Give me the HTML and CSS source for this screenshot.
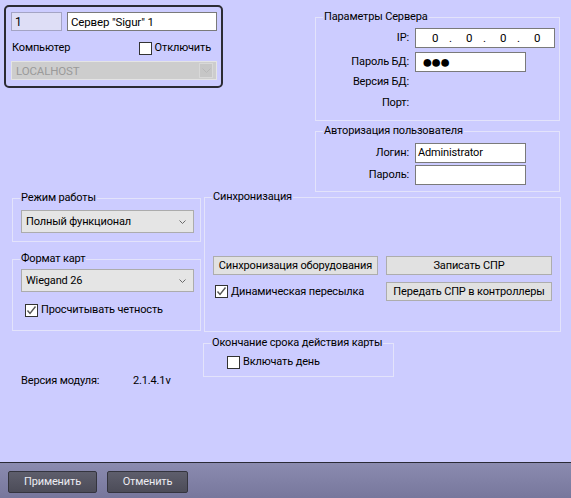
FILE: index.html
```html
<!DOCTYPE html>
<html lang="ru">
<head>
<meta charset="utf-8">
<title>Сервер Sigur</title>
<link rel="stylesheet" href="styles.css">
</head>
<body>
<div class="window">
  <div class="main">
    <div class="row-top">
      <div class="card">
        <div class="card-line">
          <div class="field field-id">1</div>
          <div class="field field-name">Сервер "Sigur" 1</div>
        </div>
        <div class="card-line card-mid">
          <span class="txt">Компьютер</span>
          <span class="check check-off"><span class="box"></span>Отключить</span>
        </div>
        <div class="combo combo-disabled">
          <span class="combo-text">LOCALHOST</span>
          <span class="combo-btn"><svg width="9" height="5" viewBox="0 0 9 5"><polyline points="0.5,0.5 4.5,4.5 8.5,0.5" fill="none" stroke="#b8b8b8" stroke-width="1"/></svg></span>
        </div>
      </div>
      <div class="col-right">
        <div class="group g-server">
          <div class="group-title">Параметры Сервера</div>
          <div class="frow fr-ip">
            <span class="lbl">IP:</span>
            <div class="field field-ip"><span>0</span><span>.</span><span>0</span><span>.</span><span>0</span><span>.</span><span>0</span></div>
          </div>
          <div class="frow fr-pwd">
            <span class="lbl">Пароль БД:</span>
            <div class="field field-pwd"><span class="dots">●●●</span></div>
          </div>
          <div class="frow fr-ver">
            <span class="lbl">Версия БД:</span>
          </div>
          <div class="frow fr-port">
            <span class="lbl">Порт:</span>
          </div>
        </div>
        <div class="group g-auth">
          <div class="group-title">Авторизация пользователя</div>
          <div class="frow fr-login">
            <span class="lbl">Логин:</span>
            <div class="field field-auth">Administrator</div>
          </div>
          <div class="frow fr-pass">
            <span class="lbl">Пароль:</span>
            <div class="field field-auth"></div>
          </div>
        </div>
      </div>
    </div>

    <div class="row-mid">
      <div class="col-left">
        <div class="group g-mode">
          <div class="group-title">Режим работы</div>
          <div class="combo combo-mode">
            <span class="combo-text">Полный функционал</span>
            <svg class="chev" width="7" height="4" viewBox="0 0 7 4"><polyline points="0.5,0.5 3.5,3.5 6.5,0.5" fill="none" stroke="#6a6a6a" stroke-width="1"/></svg>
          </div>
        </div>
        <div class="group g-format">
          <div class="group-title">Формат карт</div>
          <div class="combo combo-format">
            <span class="combo-text">Wiegand 26</span>
            <svg class="chev" width="7" height="4" viewBox="0 0 7 4"><polyline points="0.5,0.5 3.5,3.5 6.5,0.5" fill="none" stroke="#6a6a6a" stroke-width="1"/></svg>
          </div>
          <span class="check check-parity"><span class="box"><svg width="11" height="11" viewBox="0 0 11 11"><polyline points="1.5,5.5 4,8.5 9.5,1.5" fill="none" stroke="#555" stroke-width="1.4"/></svg></span>Просчитывать четность</span>
        </div>
      </div>
      <div class="group g-sync">
        <div class="group-title">Синхронизация</div>
        <div class="sync-grid">
          <div class="btn">Синхронизация оборудования</div>
          <div class="btn">Записать СПР</div>
          <span class="check check-dyn"><span class="box"><svg width="11" height="11" viewBox="0 0 11 11"><polyline points="1.5,5.5 4,8.5 9.5,1.5" fill="none" stroke="#555" stroke-width="1.4"/></svg></span>Динамическая пересылка</span>
          <div class="btn">Передать СПР в контроллеры</div>
        </div>
      </div>
    </div>

    <div class="row-bottom">
      <div class="version"><span class="ver-lbl">Версия модуля:</span><span>2.1.4.1v</span></div>
      <div class="group g-expiry">
        <div class="group-title">Окончание срока действия карты</div>
        <span class="check check-day"><span class="box"></span>Включать день</span>
      </div>
    </div>
  </div>
  <div class="footer">
    <div class="fbtn fbtn-apply">Применить</div>
    <div class="fbtn fbtn-cancel">Отменить</div>
  </div>
</div>
</body>
</html>
```

FILE: styles.css
```css
* { box-sizing: border-box; }
html, body { margin: 0; padding: 0; }
body {
  background: #ccccff;
  font-family: Roboto, "Liberation Sans", sans-serif;
  font-size: 11px;
  letter-spacing: -0.15px;
  color: #000;
  line-height: 14px;
  white-space: nowrap;
}
.window { width: 571px; height: 498px; overflow: hidden; }
.main { height: 462px; }

/* top row */
.row-top {
  display: flex;
  justify-content: space-between;
  height: 197px;
  padding: 0 11px 0 4px;
}
.card {
  margin-top: 5px;
  width: 219px;
  height: 83px;
  border: 2px solid #2c2c34;
  border-radius: 5px;
  padding: 5px 4px 0 5px;
}
.card-line { display: flex; align-items: center; }
.field {
  height: 19px;
  background: #fff;
  border: 1px solid #7a7a7a;
  display: flex;
  align-items: center;
  padding-left: 3px;
}
.field-id { width: 51px; background: #dedef6; border-color: #a4a4c4; font-size: 12px; }
.field-name { flex: 1; margin-left: 5px; font-size: 11.5px; }
.card-mid { margin-top: 9px; height: 16px; padding-left: 1px; }
.check { display: inline-flex; align-items: center; }
.box {
  width: 13px;
  height: 13px;
  background: #fff;
  border: 1px solid #333;
  margin-right: 3px;
  display: inline-flex;
  align-items: center;
  justify-content: center;
  flex: none;
}
.check-off { margin-left: auto; margin-right: 6px; }

.combo {
  display: flex;
  align-items: center;
  height: 23px;
  background: #e5e5e5;
  border: 1px solid #acacac;
  padding-left: 4px;
}
.combo-text { flex: 1; }
.combo-disabled {
  margin-top: 5px;
  height: 19px;
  background: #cdcdcd;
  border: 1px solid #e4e4e4;
  color: #9a9a9a;
  padding-right: 3px;
  font-size: 11.5px;
}
.combo-btn {
  width: 14px;
  height: 15px;
  background: #c6c6c6;
  border: 1px solid #d8d8d8;
  display: flex;
  align-items: center;
  justify-content: center;
}
.chev { margin-right: 7px; }

/* group boxes */
.group { border: 1px solid #e3e3fb; }
.group-title {
  width: fit-content;
  margin: -8px 0 0 7px;
  padding: 0 1px;
  background: #ccccff;
  line-height: 14px;
}

.col-right { width: 245px; margin-top: 17px; }
.g-server { height: 104px; }
.frow { display: flex; align-items: center; height: 20px; }
.lbl { width: 93px; text-align: right; margin-right: 6px; }
.fr-ip { margin-top: 4px; }
.fr-pwd { margin-top: 4px; }
.fr-port { margin-top: 1px; }
.field-ip { width: 140px; height: 20px; padding-left: 16px; font-size: 11.5px; }
.field-ip span { width: 17px; }
.field-pwd { width: 111px; height: 20px; padding-left: 6px; }
.dots { font-size: 18px; letter-spacing: -2px; line-height: 18px; }
.g-auth { margin-top: 10px; height: 61px; }
.fr-login { margin-top: 5px; }
.fr-pass { margin-top: 2px; }
.field-auth { width: 111px; height: 20px; padding-left: 2px; }

/* middle row */
.row-mid { display: flex; height: 135px; padding-left: 12px; }
.col-left { width: 189px; }
.g-mode { margin-top: 1px; height: 44px; }
.combo-mode { margin: 5px 6px 0 8px; }
.g-format { margin-top: 17px; height: 72px; }
.combo-format { margin: 3px 6px 0 8px; }
.check-parity { margin: 11px 0 0 12px; }
.g-sync { margin-left: 3px; width: 357px; }
.sync-grid {
  display: grid;
  grid-template-columns: 165px 166px;
  column-gap: 8px;
  row-gap: 7px;
  margin: 52px 0 0 8px;
}
.btn {
  height: 19px;
  background: #e1e1e1;
  border: 1px solid #adadad;
  display: flex;
  align-items: center;
  justify-content: center;
}
.check-dyn { padding-left: 2px; }

/* bottom row */
.row-bottom { display: flex; margin-top: 11px; padding-left: 12px; }
.version { width: 191px; padding-left: 9px; margin-top: 31px; display: flex; }
.ver-lbl { width: 112px; }
.g-expiry { width: 191px; height: 34px; }
.check-day { margin: 5px 0 0 23px; }

/* footer */
.footer {
  height: 36px;
  border-top: 1px solid #2a2a36;
  background: linear-gradient(#8b8bb0, #77779c);
  display: flex;
  padding: 8px 0 0 8px;
  gap: 10px;
}
.fbtn {
  height: 22px;
  border: 1px solid #34343e;
  border-radius: 2px;
  background: linear-gradient(#5e5e6c, #4c4c58);
  color: #ececf2;
  display: flex;
  align-items: center;
  justify-content: center;
}
.fbtn-apply { width: 89px; }
.fbtn-cancel { width: 81px; }
```
